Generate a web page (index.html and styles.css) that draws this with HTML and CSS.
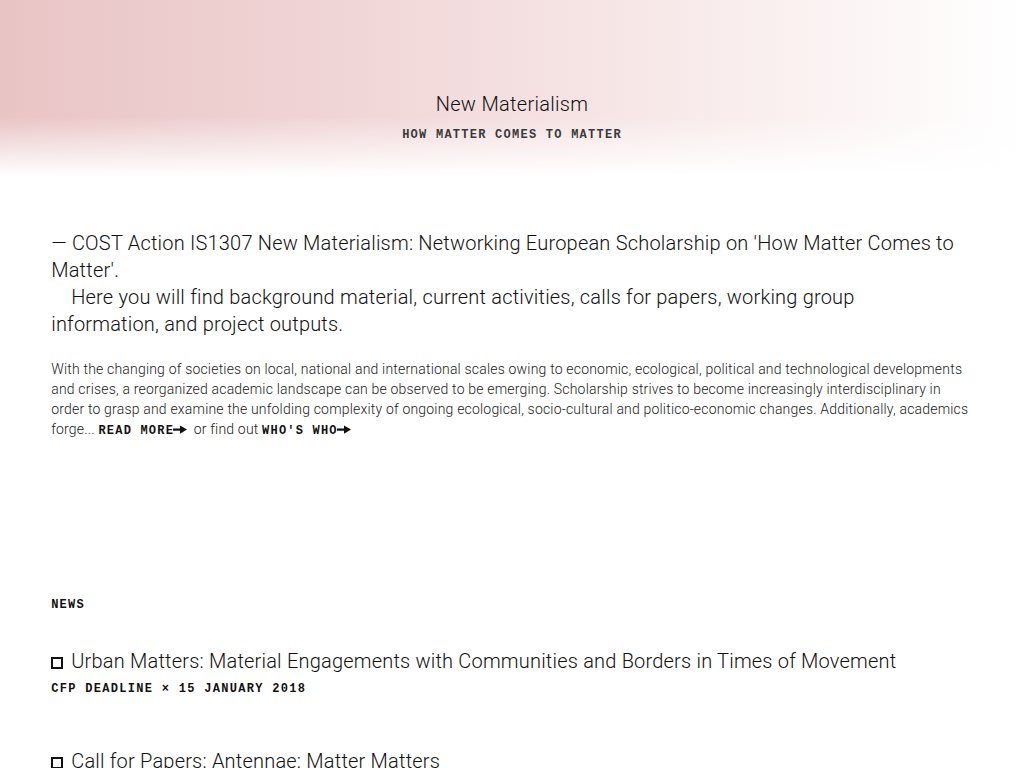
FILE: index.html
```html
<!DOCTYPE html>
<html>
<head>
<meta charset="utf-8">
<title>New Materialism</title>
<link rel="stylesheet" href="styles.css">
</head>
<body>
<header class="site-header">
  <h1 class="site-title">New Materialism</h1>
  <p class="site-tagline">How matter comes to matter</p>
</header>
<main class="content">
  <section class="intro">
    <p class="lead">— COST Action IS1307 New Materialism: Networking European Scholarship on 'How Matter Comes to Matter'.<br><span class="indent">Here you will find background material, current activities, calls for papers, working group information, and project outputs.</span></p>
    <p class="body-text">With the changing of societies on local, national and international scales owing to economic, ecological, political and technological developments and crises, a reorganized academic landscape can be observed to be emerging. Scholarship strives to become increasingly interdisciplinary in order to grasp and examine the unfolding complexity of ongoing ecological, socio-cultural and politico-economic changes. Additionally, academics forge... <a class="mono-link" href="#">Read more<svg class="arrow" width="14" height="9" viewBox="0 0 14 9"><rect x="0" y="3.5" width="8" height="2.2" fill="#111"/><polygon points="7,0.5 14,4.6 7,8.7" fill="#111"/></svg></a> or find out <a class="mono-link" href="#">Who's who<svg class="arrow" width="14" height="9" viewBox="0 0 14 9"><rect x="0" y="3.5" width="8" height="2.2" fill="#111"/><polygon points="7,0.5 14,4.6 7,8.7" fill="#111"/></svg></a></p>
  </section>
  <section class="news">
    <h2 class="section-label">News</h2>
    <article class="news-item">
      <h3 class="news-title"><span class="box"></span>Urban Matters: Material Engagements with Communities and Borders in Times of Movement</h3>
      <p class="news-meta">CFP deadline × 15 January 2018</p>
    </article>
    <article class="news-item">
      <h3 class="news-title"><span class="box"></span>Call for Papers: Antennae: Matter Matters</h3>
    </article>
  </section>
</main>
</body>
</html>
```
FILE: styles.css
```css
* { box-sizing: border-box; }
html, body { margin: 0; padding: 0; }
body {
  font-family: Roboto, "Noto Sans", sans-serif;
  color: #1a1a1a;
  background: #fff;
}
.site-header {
  height: 180px;
  padding-top: 92px;
  text-align: center;
  background:
    linear-gradient(to bottom, rgba(255,255,255,0) 0%, rgba(255,255,255,0) 65%, #fff 98%),
    linear-gradient(to right, #e9c4c5 0%, #f2d9da 40%, #f9ecec 70%, #ffffff 100%);
}
.site-title {
  margin: 0;
  font-size: 20px;
  font-weight: 300;
  letter-spacing: 0.3px;
  line-height: 24px;
  color: #111;
}
.site-tagline {
  margin: 11px 0 0;
  font-family: "Liberation Mono", monospace;
  font-weight: bold;
  font-size: 12px;
  letter-spacing: 1.25px;
  text-transform: uppercase;
  color: #3a3a3a;
  line-height: 16px;
}
.content {
  padding: 50px 5% 0;
}
.lead {
  margin: 0;
  padding-right: 12px;
  font-size: 20px;
  font-weight: 300;
  letter-spacing: 0.2px;
  line-height: 27px;
  color: #111;
}
.indent { margin-left: 20px; }
.body-text {
  margin: 21px 0 0;
  font-size: 14px;
  font-weight: 300;
  letter-spacing: 0.19px;
  line-height: 20px;
  color: #222;
}
.mono-link {
  font-family: "Liberation Mono", monospace;
  font-weight: bold;
  font-size: 12px;
  line-height: 14px;
  letter-spacing: 1.2px;
  text-transform: uppercase;
  color: #111;
  text-decoration: none;
}
.arrow { margin-left: -1px; margin-right: 3px; vertical-align: 0; }
.news { margin-top: 158px; }
.section-label {
  margin: 0;
  font-family: "Liberation Mono", monospace;
  font-weight: bold;
  font-size: 12px;
  letter-spacing: 1.2px;
  text-transform: uppercase;
  line-height: 16px;
  color: #111;
}
.news-item { margin-top: 35px; }
.news-item + .news-item { margin-top: 51px; }
.news-title {
  margin: 0;
  font-size: 20px;
  font-weight: 300;
  letter-spacing: 0.2px;
  line-height: 27px;
  color: #111;
  display: flex;
  align-items: center;
}
.box {
  width: 12px;
  height: 12px;
  border: 2px solid #111;
  margin-right: 8px;
  margin-top: 2px;
  flex: none;
}
.news-meta {
  margin: 6px 0 0;
  font-family: "Liberation Mono", monospace;
  font-weight: bold;
  font-size: 12px;
  letter-spacing: 1.3px;
  text-transform: uppercase;
  line-height: 16px;
  color: #111;
}
```
